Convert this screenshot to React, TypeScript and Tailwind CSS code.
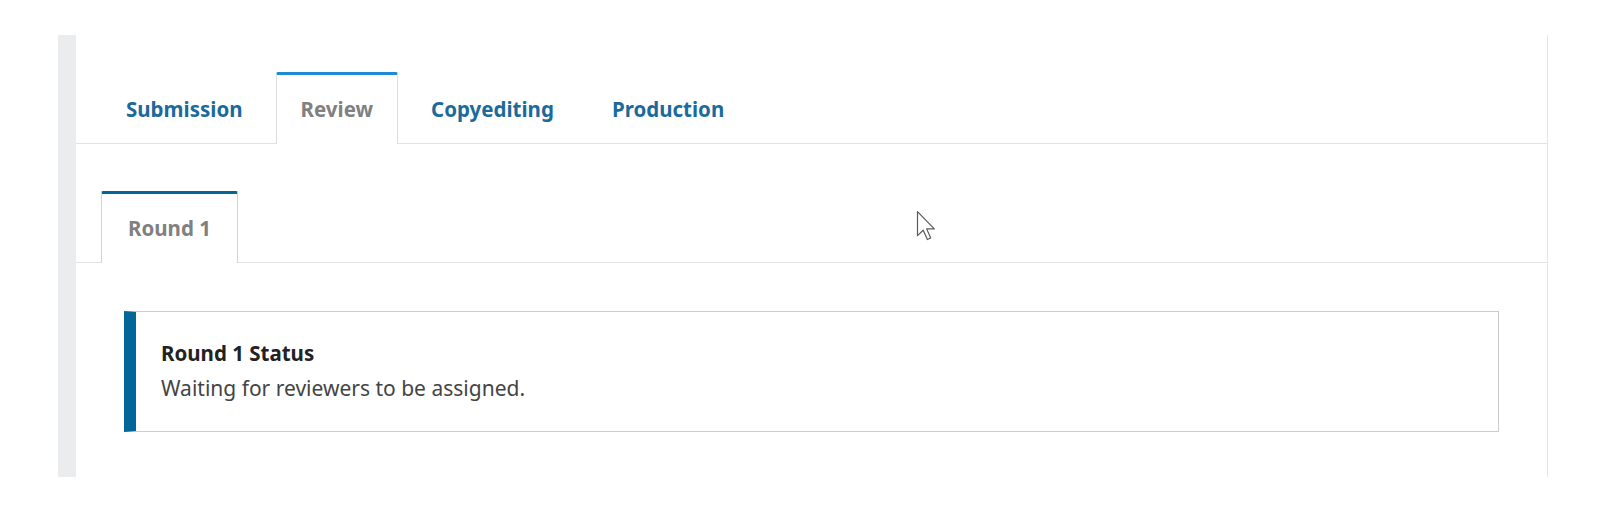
import React from "react";

type Tab = { label: string; active?: boolean };

const workflowTabs: Tab[] = [
    { label: "Submission" },
    { label: "Review", active: true },
    { label: "Copyediting" },
    { label: "Production" },
];

// Mouse pointer captured in the screenshot
const Cursor: React.FC = () => (
    <svg
        className="absolute left-[916px] top-[210px] pointer-events-none"
        width="21"
        height="31"
        viewBox="-1 -1 14 20.5"
    >
        <path
            d="M0 0 L0 16 L3.8 12.4 L6.6 18.6 L8.8 17.6 L6.1 11.5 L11.2 11.5 Z"
            fill="#ffffff"
            stroke="#5a5a5a"
            strokeWidth="0.8"
            strokeLinejoin="round"
        />
    </svg>
);

export default function App() {
    return (
        <div className="relative w-full h-[506px] bg-white pt-[35px] pl-[58px] font-['Noto_Sans',sans-serif]">
            <div className="flex w-[1490px] h-[442px]">
                {/* Left gutter */}
                <div className="w-[18px] bg-[#ebecee]" />

                {/* Main panel */}
                <div className="flex-1 border-r border-[#e6e6e6] bg-white">
                    {/* Workflow stage tabs */}
                    <div className="flex gap-2 pt-[37px] pl-[25px] border-b border-[#e3e3e3]">
                        {workflowTabs.map((tab) =>
                            tab.active ? (
                                <div
                                    key={tab.label}
                                    className="h-[72px] -mb-px flex items-center px-6 bg-white border-x border-[#dddddd] border-t-[3px] border-t-[#1e8ad6] rounded-t-[2px] text-[20.5px] font-bold text-[#808080]"
                                >
                                    {tab.label}
                                </div>
                            ) : (
                                <div
                                    key={tab.label}
                                    className="h-[72px] -mb-px flex items-center px-6 border-x border-transparent border-t-[3px] border-t-transparent text-[20.5px] font-bold text-[#1b6a9c]"
                                >
                                    {tab.label}
                                </div>
                            )
                        )}
                    </div>

                    {/* Review round tabs */}
                    <div className="flex pt-[47px] pl-[25px] border-b border-[#e3e3e3]">
                        <div className="h-[72px] -mb-px flex items-center px-[26px] bg-white border-x border-[#d4d4d4] border-t-[3px] border-t-[#006798] rounded-t-[2px] text-[20.5px] font-bold text-[#808080]">
                            Round 1
                        </div>
                    </div>

                    {/* Round status */}
                    <div className="pt-[48px] pl-[48px] pr-[48px]">
                        <div className="border border-[#cccccc] border-l-[12px] border-l-[#006798] pl-[25px] pt-[24px] pb-[25px]">
                            <div className="text-[20.5px] leading-[35px] font-bold text-[#222222]">
                                Round 1 Status
                            </div>
                            <div className="text-[21px] leading-[35px] text-[#444444]">
                                Waiting for reviewers to be assigned.
                            </div>
                        </div>
                    </div>
                </div>
            </div>

            <Cursor />
        </div>
    );
}
